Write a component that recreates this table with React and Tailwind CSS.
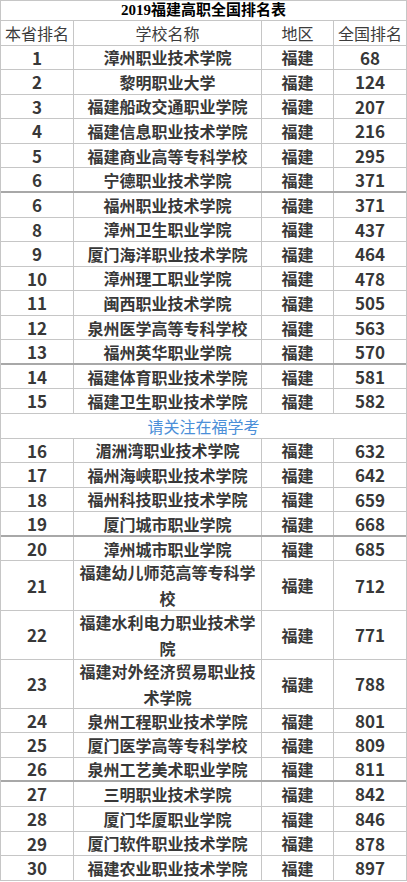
import React from "react";

const rows = [
  ["1", "漳州职业技术学院", "68"],
  ["2", "黎明职业大学", "124"],
  ["3", "福建船政交通职业学院", "207"],
  ["4", "福建信息职业技术学院", "216"],
  ["5", "福建商业高等专科学校", "295"],
  ["6", "宁德职业技术学院", "371", "thick"],
  ["6", "福州职业技术学院", "371"],
  ["8", "漳州卫生职业学院", "437"],
  ["9", "厦门海洋职业技术学院", "464"],
  ["10", "漳州理工职业学院", "478"],
  ["11", "闽西职业技术学院", "505"],
  ["12", "泉州医学高等专科学校", "563"],
  ["13", "福州英华职业学院", "570", "thick"],
  ["14", "福建体育职业技术学院", "581"],
  ["15", "福建卫生职业技术学院", "582"],
  "banner",
  ["16", "湄洲湾职业技术学院", "632"],
  ["17", "福州海峡职业技术学院", "642"],
  ["18", "福州科技职业技术学院", "659"],
  ["19", "厦门城市职业学院", "668", "thick"],
  ["20", "漳州城市职业学院", "685"],
  ["21", "福建幼儿师范高等专科学校", "712", "double"],
  ["22", "福建水利电力职业技术学院", "771", "double"],
  ["23", "福建对外经济贸易职业技术学院", "788", "double"],
  ["24", "泉州工程职业技术学院", "801"],
  ["25", "厦门医学高等专科学校", "809"],
  ["26", "泉州工艺美术职业学院", "811", "thick"],
  ["27", "三明职业技术学院", "842"],
  ["28", "厦门华厦职业学院", "846"],
  ["29", "厦门软件职业技术学院", "878"],
  ["30", "福建农业职业技术学院", "897"],
];

const Row = ({ rank, name, score, kind }) => {
  const h = kind === "double" ? "h-[49.14px]" : "h-[24.57px]";
  const line =
    kind === "thick" ? "border-b-2 border-b-[#a8a8a8]" : "border-b border-b-[#c6c6c6]";
  return (
    <div className={`flex ${h} ${line} text-[16px] font-bold text-[#383838]`}>
      <div className="w-[73px] flex items-center justify-center text-[17px] border-r border-[#c6c6c6]">{rank}</div>
      <div className="w-[188px] flex items-center justify-center text-center px-1 leading-[26px] border-r border-[#c6c6c6]">
        {name}
      </div>
      <div className="w-[72px] flex items-center justify-center border-r border-[#c6c6c6]">福建</div>
      <div className="flex-1 flex items-center justify-center text-[17px]">{score}</div>
    </div>
  );
};

export default function App() {
  return (
    <div className="w-[407px] h-[882px] bg-white font-['Noto_Sans_CJK_SC',sans-serif]">
      <div className="w-[407px] border border-[#c6c6c6] border-b-0">
        <div className="h-[20px] flex items-center justify-center border-b border-[#c6c6c6] text-[15px] font-bold text-black font-['Liberation_Serif','Noto_Sans_CJK_SC',serif] leading-none">
          2019福建高职全国排名表
        </div>
        <div className="flex h-[24.57px] border-b border-[#c6c6c6] text-[16px] text-[#3c3c3c]">
          <div className="w-[73px] flex items-center justify-center border-r border-[#c6c6c6]">本省排名</div>
          <div className="w-[188px] flex items-center justify-center border-r border-[#c6c6c6]">学校名称</div>
          <div className="w-[72px] flex items-center justify-center border-r border-[#c6c6c6]">地区</div>
          <div className="flex-1 flex items-center justify-center">全国排名</div>
        </div>
        {rows.map((r, i) =>
          r === "banner" ? (
            <div
              key={i}
              className="h-[24.57px] flex items-center justify-center border-b border-[#c6c6c6] text-[16px] text-[#4b8fd8]"
            >
              请关注在福学考
            </div>
          ) : (
            <Row key={i} rank={r[0]} name={r[1]} score={r[2]} kind={r[3]} />
          )
        )}
      </div>
    </div>
  );
}
